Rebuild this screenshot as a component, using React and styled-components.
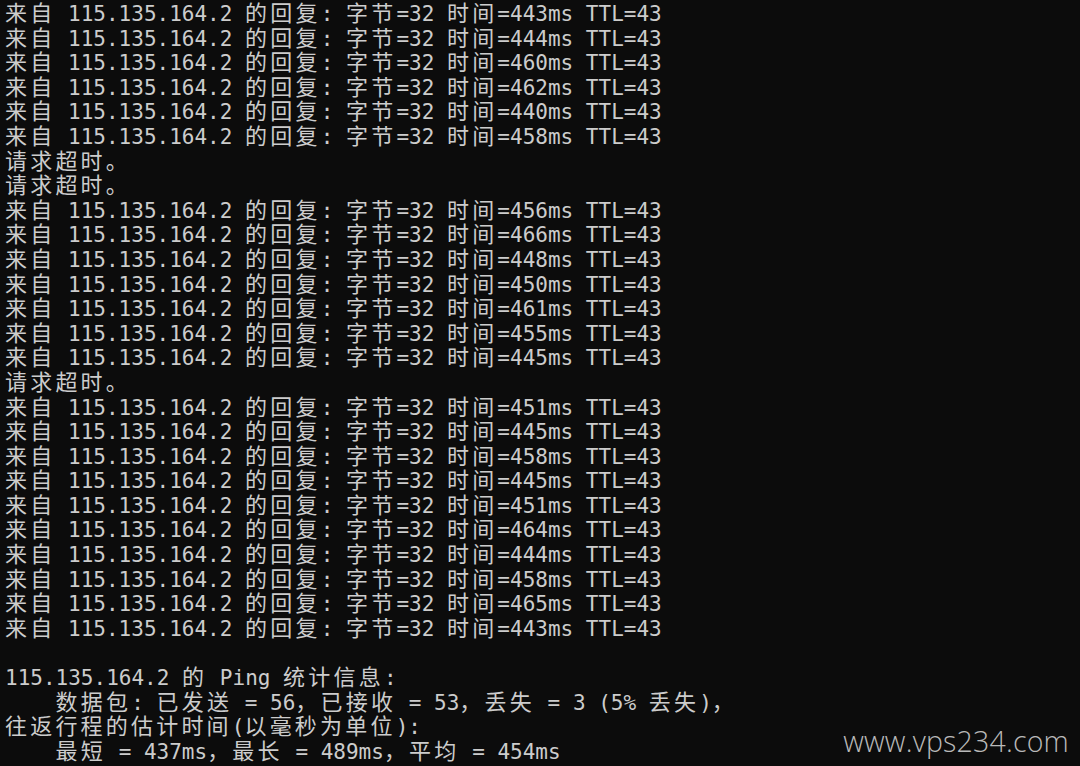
import React from "react";
import styled, { createGlobalStyle } from "styled-components";

const Global = createGlobalStyle`
  html, body {
    margin: 0;
    padding: 0;
    background: #0c0c0c;
  }
  #root {
    min-height: 766px;
  }
`;

const Terminal = styled.div`
  position: relative;
  width: 1080px;
  height: 766px;
  overflow: hidden;
  background: #0c0c0c;
  color: #cccccc;
  font-family: "DejaVu Sans Mono", "Liberation Mono", monospace;
  font-size: 21px;
  padding-left: 5px;
  box-sizing: border-box;
`;

const Line = styled.div`
  height: 24.6px;
  line-height: 22px;
  white-space: pre;
`;

const Wide = styled.span`
  font-family: "Noto Sans CJK SC", sans-serif;
  font-size: 22px;
  letter-spacing: 3.2px;
`;

const Watermark = styled.div`
  position: absolute;
  right: 11px;
  top: 724px;
  font-family: "Open Sans", "Noto Sans", sans-serif;
  font-weight: 300;
  font-size: 28.5px;
  line-height: 34px;
  color: #b9b9b9;
  letter-spacing: 0.2px;
`;

const CJK = /([\u3000-\u303f\u4e00-\u9fff\uff00-\uffef]+)/;

function TermLine({ text }) {
  const parts = text.split(CJK).filter((p) => p !== "");
  return (
    <Line>
      {parts.length === 0
        ? " "
        : parts.map((p, i) =>
            CJK.test(p) ? <Wide key={i}>{p}</Wide> : <React.Fragment key={i}>{p}</React.Fragment>
          )}
    </Line>
  );
}

const reply = (t) => `来自 115.135.164.2 的回复: 字节=32 时间=${t}ms TTL=43`;
const TIMEOUT = "请求超时。";

const seq = [
  443, 444, 460, 462, 440, 458, null, null, 456, 466, 448, 450, 461, 455, 445, null,
  451, 445, 458, 445, 451, 464, 444, 458, 465, 443,
];

const lines = [
  ...seq.map((t) => (t === null ? TIMEOUT : reply(t))),
  "",
  "115.135.164.2 的 Ping 统计信息:",
  "    数据包: 已发送 = 56，已接收 = 53，丢失 = 3 (5% 丢失)，",
  "往返行程的估计时间(以毫秒为单位):",
  "    最短 = 437ms，最长 = 489ms，平均 = 454ms",
];

export default function App() {
  return (
    <>
      <Global />
      <Terminal>
        {lines.map((l, i) => (
          <TermLine key={i} text={l} />
        ))}
        <Watermark>www.vps234.com</Watermark>
      </Terminal>
    </>
  );
}
